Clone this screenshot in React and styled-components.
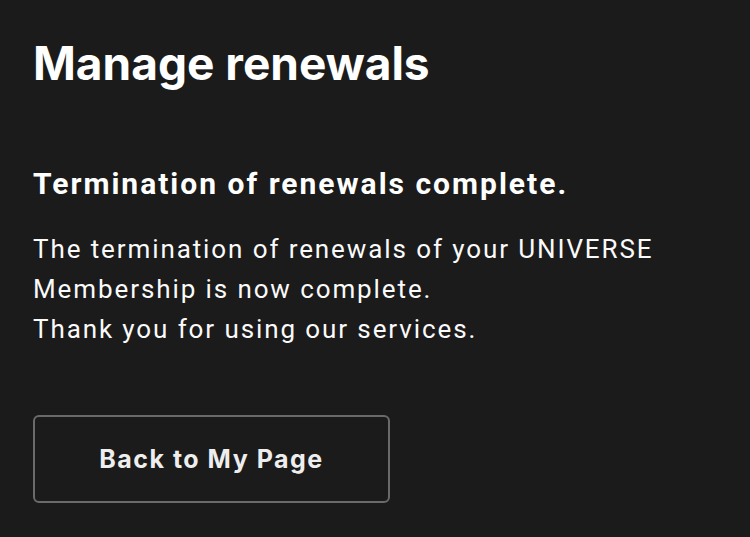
import styled, { createGlobalStyle } from "styled-components";

const Global = createGlobalStyle`
  html, body {
    margin: 0;
    background: #1b1b1b;
  }
  body {
    font-family: Roboto, "Liberation Sans", sans-serif;
    color: #fff;
  }
`;

const Page = styled.main`
  padding: 35px 33px 0;
  display: flex;
  flex-direction: column;
`;

const Title = styled.h1`
  margin: 0;
  font-family: Inter, Roboto, sans-serif;
  font-size: 46px;
  line-height: 56px;
  font-weight: 700;
`;

const Heading = styled.h2`
  margin: 75px 0 0;
  font-size: 30px;
  line-height: 36px;
  font-weight: 700;
  letter-spacing: 2px;
`;

const Body = styled.p`
  margin: 27px 0 0;
  font-size: 26px;
  line-height: 40px;
  font-weight: 400;
  letter-spacing: 1.9px;
  color: #fafafa;
`;

const Button = styled.button`
  margin-top: 66px;
  width: 357px;
  height: 88px;
  border: 2px solid #6a6a6a;
  border-radius: 6px;
  background: transparent;
  color: #eee;
  font-family: Inter, Roboto, sans-serif;
  font-size: 25px;
  font-weight: 700;
  letter-spacing: 1.5px;
  cursor: pointer;
`;

const App = () => {
  return (
    <>
      <Global />
      <Page>
        <Title>Manage renewals</Title>
        <Heading>Termination of renewals complete.</Heading>
        <Body>
          The termination of renewals of your UNIVERSE
          <br />
          Membership is now complete.
          <br />
          Thank you for using our services.
        </Body>
        <div>
          <Button>Back to My Page</Button>
        </div>
      </Page>
    </>
  );
};

export default App;
